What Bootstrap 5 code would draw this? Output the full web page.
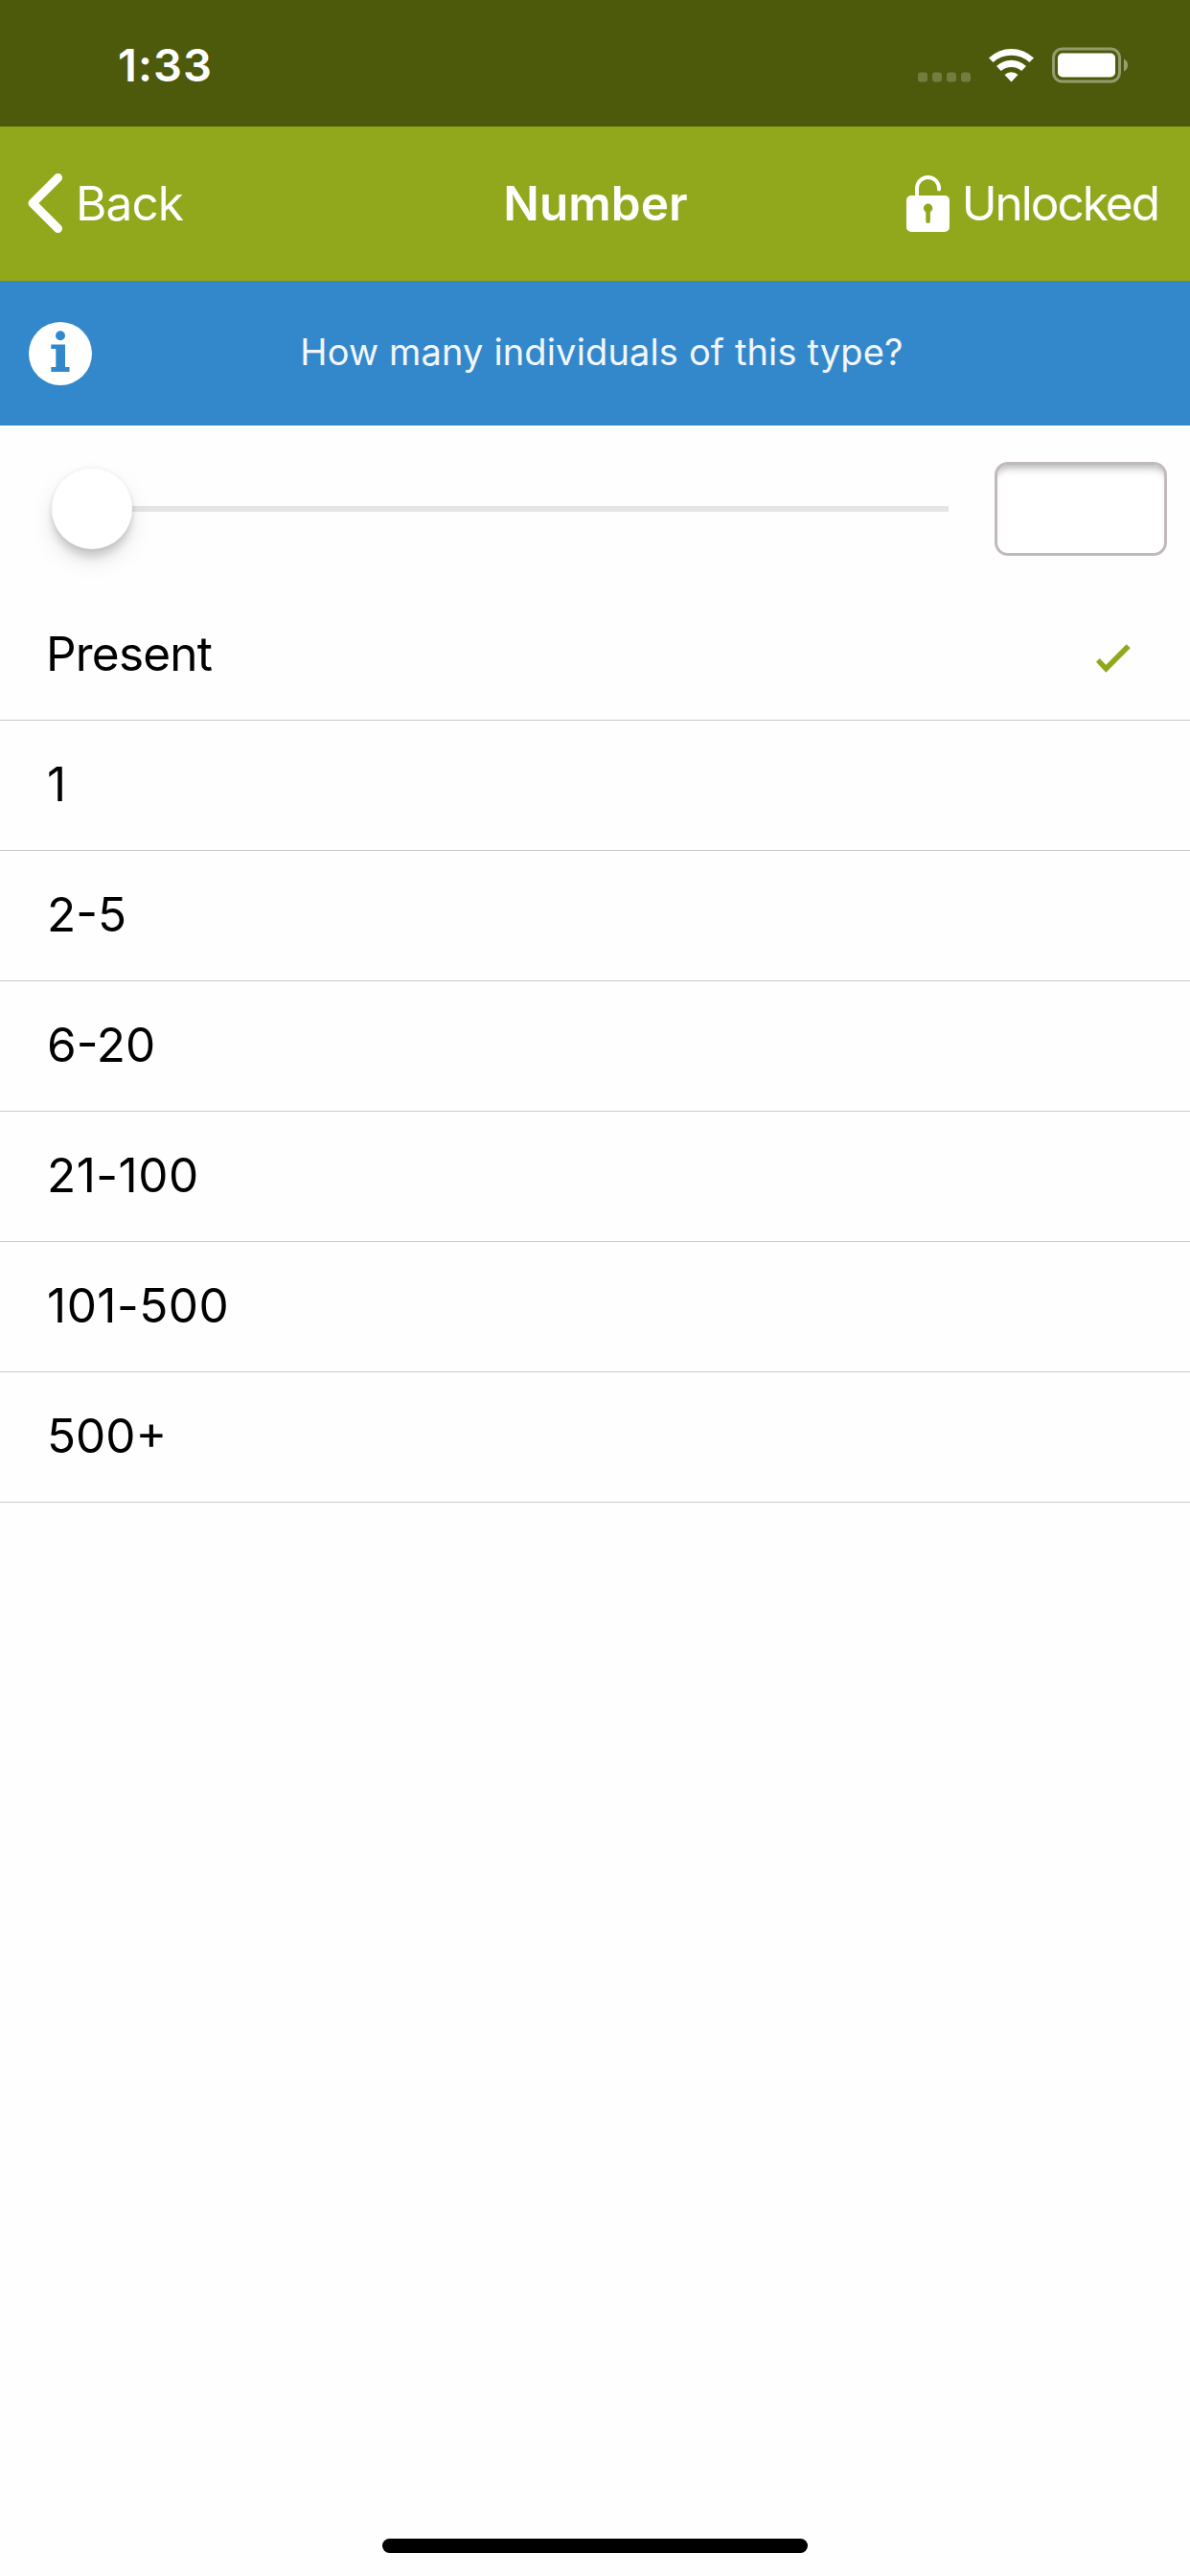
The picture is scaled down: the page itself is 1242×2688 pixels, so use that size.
<!DOCTYPE html>
<html lang="en">
<head>
<meta charset="utf-8">
<meta name="viewport" content="width=device-width, initial-scale=1">
<title>Number</title>
<link rel="stylesheet" href="https://cdn.jsdelivr.net/npm/bootstrap@5.3.0/dist/css/bootstrap.min.css">
<style>
  body { font-family: Inter, "Liberation Sans", sans-serif; color: #000; background: #fefefe; height: 2688px; overflow: hidden; }
  svg { display: block; flex: none; }
  .status-strip { height: 132px; background: #4d5a0c; color: #fff; padding: 0 65px 0 123px; }
  .status-strip svg { margin-top: 3px; }
  .clock { font-size: 47px; font-weight: 600; line-height: 60px; padding-top: 4px; letter-spacing: 1.1px; }
  .title-strip { height: 162px; background: #91a71c; border-bottom: 1px solid #768a1f; color: #fff; padding: 0 27px 1px; font-size: 49.5px; line-height: 60px; }
  .title-strip .heading { font-weight: 600; font-size: 49.5px; line-height: 60px; margin: 0 -.5px 0 .5px; }
  .side { flex: 1 1 0; }
  .back-label { margin-left: 12px; letter-spacing: -.9px; }
  .lock-label { margin: 0 6px 0 12px; letter-spacing: -2px; }
  .hint { height: 150px; background: #3388cb; color: #f2f6fb; padding: 0 82px 0 30px; font-size: 38px; line-height: 46px; letter-spacing: .15px; }
  .hint p { padding-bottom: 4px; }
  .slider-row { height: 172px; padding: 2px 24px 0 54px; }
  .track { width: 936px; height: 6px; background: #e5e5e5; }
  .knob { width: 84px; height: 84px; border-radius: 50%; background: #fff; box-shadow: 0 0 0 3px rgba(0,0,0,.02), 0 9px 9px -1px rgba(0,0,0,.14), 0 12px 24px rgba(0,0,0,.1); }
  .amount { width: 180px; height: 98px; border: 3px solid #c1baba; border-radius: 14px; background: #fff; box-shadow: inset 0 9px 9px -6px rgba(0,0,0,.3); }
  .choices .list-group-item { height: 136px; padding: 0 62px 3px 49px; border-width: 0 0 1px; border-color: #c9c9c9; background: transparent; color: #000; font-size: 49.5px; line-height: 60px; }
  .choices .list-group-item:last-child { border-bottom-width: 1px; }
  .choices svg { margin-top: 9px; }
  .word { letter-spacing: -.8px; margin-left: -1px; }
  .wide { letter-spacing: .5px; }
  .home-bar { width: 444px; height: 15px; border-radius: 8px; background: #000; margin-bottom: 24px; }
</style>
</head>
<body class="d-flex flex-column">
<header>
  <div class="status-strip d-flex align-items-center justify-content-between">
    <div class="clock">1:33</div>
    <svg width="220" height="38" viewBox="957 48.5 220 38">
      <g fill="#fff" fill-opacity=".21"><rect x="958" y="75" width="10" height="10" rx="3"/><rect x="973" y="75" width="10" height="10" rx="3"/><rect x="988" y="75" width="10" height="10" rx="3"/><rect x="1003" y="75" width="10" height="10" rx="3"/></g>
      <g fill="#fff">
        <path d="M1032 60A34 34 0 0 1 1079 60L1074.400 64.500A28 28 0 0 0 1036.600 64.500Z"/>
        <path d="M1040 68.500A22.500 22.500 0 0 1 1071 68.500L1066.200 73.500A16 16 0 0 0 1044.800 73.500Z"/>
        <path d="M1048.500 77.500A10.500 10.500 0 0 1 1062.500 77.500L1055.500 85Z"/>
        <rect x="1104" y="55" width="60" height="25" rx="5"/>
      </g>
      <rect x="1099.500" y="50.500" width="69" height="34" rx="9" fill="none" stroke="#fff" stroke-opacity=".4" stroke-width="3"/>
      <path d="M1173 61Q1177 63 1177 67.500T1173 74Z" fill="#fff" fill-opacity=".42"/>
    </svg>
  </div>
  <nav class="title-strip d-flex align-items-center">
    <div class="side d-flex align-items-center">
      <svg width="40" height="66" viewBox="27 179 40 66"><path d="M60.500 185.500L34 212L60.500 238.500" fill="none" stroke="#fff" stroke-width="9" stroke-linecap="round" stroke-linejoin="round"/></svg>
      <span class="back-label">Back</span>
    </div>
    <h1 class="heading">Number</h1>
    <div class="side d-flex align-items-center justify-content-end">
      <svg width="47" height="62" viewBox="944 181 47 62">
        <path d="M956 206V196.500A11.500 11.500 0 0 1 979 196.500V197.500" fill="none" stroke="#fff" stroke-width="4" stroke-linecap="round"/>
        <rect x="945" y="204" width="45" height="38" rx="5" fill="#fff"/>
        <circle cx="967.600" cy="217.300" r="4.700" fill="#91a71c"/><path d="M967.600 218V230.800" stroke="#91a71c" stroke-width="4.600" stroke-linecap="round"/>
      </svg>
      <span class="lock-label">Unlocked</span>
    </div>
  </nav>
</header>
<section class="hint d-flex align-items-center">
  <svg width="66" height="66" viewBox="30 336 66 66"><circle cx="63" cy="369" r="33" fill="#fff"/><circle cx="63" cy="350.300" r="5" fill="#3388cb"/><path d="M53.300 359.500H68V383H72.500V388H53.300V383H58.300V364H53.300Z" fill="#3388cb"/></svg>
  <p class="flex-grow-1 text-center m-0">How many individuals of this type?</p>
</section>
<section class="slider-row d-flex align-items-center justify-content-between">
  <div class="track d-flex align-items-center"><div class="knob flex-shrink-0"></div></div>
  <div class="amount"></div>
</section>
<ul class="choices list-group list-group-flush rounded-0">
  <li class="list-group-item d-flex align-items-center justify-content-between"><span class="word">Present</span>
    <svg width="37" height="31" viewBox="1143 671 37 31"><path d="M1144 690.700L1147.700 687L1154.300 693.700L1175.700 672.300L1179.700 676.300L1154.300 701.700Z" fill="#91a71c"/></svg></li>
  <li class="list-group-item d-flex align-items-center">1</li>
  <li class="list-group-item d-flex align-items-center">2-5</li>
  <li class="list-group-item d-flex align-items-center">6-20</li>
  <li class="list-group-item d-flex align-items-center"><span class="wide">21-100</span></li>
  <li class="list-group-item d-flex align-items-center"><span class="wide">101-500</span></li>
  <li class="list-group-item d-flex align-items-center">500+</li>
</ul>
<footer class="mt-auto d-flex justify-content-center"><div class="home-bar"></div></footer>
<script src="https://cdn.jsdelivr.net/npm/bootstrap@5.3.0/dist/js/bootstrap.bundle.min.js"></script>
</body>
</html>
